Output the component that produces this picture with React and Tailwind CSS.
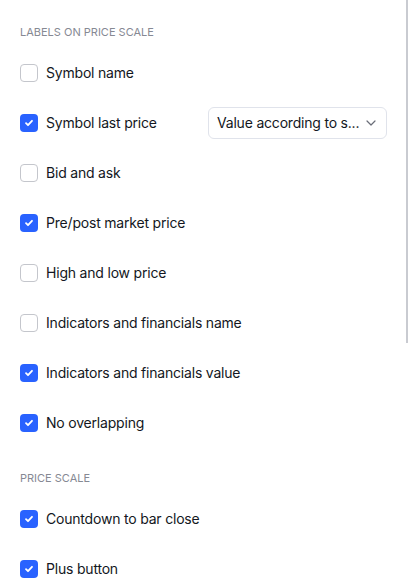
const labels = [
  { text: "Symbol name", checked: false },
  { text: "Symbol last price", checked: true, select: "Value according to s..." },
  { text: "Bid and ask", checked: false },
  { text: "Pre/post market price", checked: true },
  { text: "High and low price", checked: false },
  { text: "Indicators and financials name", checked: false },
  { text: "Indicators and financials value", checked: true },
  { text: "No overlapping", checked: true },
];

const priceScale = [
  { text: "Countdown to bar close", checked: true },
  { text: "Plus button", checked: true },
];

function Checkbox({ checked }) {
  if (checked) {
    return (
      <span className="flex h-[18px] w-[18px] shrink-0 items-center justify-center rounded-[4px] bg-[#2962ff]">
        <svg width="12" height="12" viewBox="0 0 12 12" fill="none">
          <path d="M3 6.2l2 2 4-4.4" stroke="white" strokeWidth="1.8" strokeLinecap="round" strokeLinejoin="round" />
        </svg>
      </span>
    );
  }
  return <span className="h-[18px] w-[18px] shrink-0 rounded-[4px] border border-[#c4c6cc] bg-white" />;
}

function Row({ item }) {
  return (
    <div className="flex h-[50px] items-center">
      <Checkbox checked={item.checked} />
      <span className="ml-2 -mt-px text-[14px] tracking-[-0.2px] text-[#131722]">{item.text}</span>
      {item.select && (
        <div className="ml-auto flex h-8 w-[179px] items-center justify-between rounded-md border border-[#e0e3eb] pl-2 pr-2.5 text-[14px] tracking-[-0.2px] text-[#131722]">
          <span className="-mt-px">{item.select}</span>
          <svg width="10" height="6" viewBox="0 0 10 6" fill="none">
            <path d="M1 1l4 4 4-4" stroke="#6a6d78" strokeWidth="1.2" strokeLinecap="round" strokeLinejoin="round" />
          </svg>
        </div>
      )}
    </div>
  );
}

function SectionTitle({ children }) {
  return <div className="h-4 text-[11px] leading-4 uppercase text-[#868993]">{children}</div>;
}

export default function App() {
  return (
    <div className="relative h-[578px] w-[409px] overflow-hidden bg-white font-['Inter',sans-serif]">
      <div className="pl-5 pr-[22px]">
        <div className="pt-6 mb-2">
          <SectionTitle>Labels on price scale</SectionTitle>
        </div>
        {labels.map((item) => (
          <Row key={item.text} item={item} />
        ))}
        <div className="mt-[22px] mb-2">
          <SectionTitle>Price scale</SectionTitle>
        </div>
        {priceScale.map((item) => (
          <Row key={item.text} item={item} />
        ))}
      </div>
      <div className="absolute right-[1px] top-0 h-[343px] w-[2px] bg-[#c9cbd1]" />
    </div>
  );
}
